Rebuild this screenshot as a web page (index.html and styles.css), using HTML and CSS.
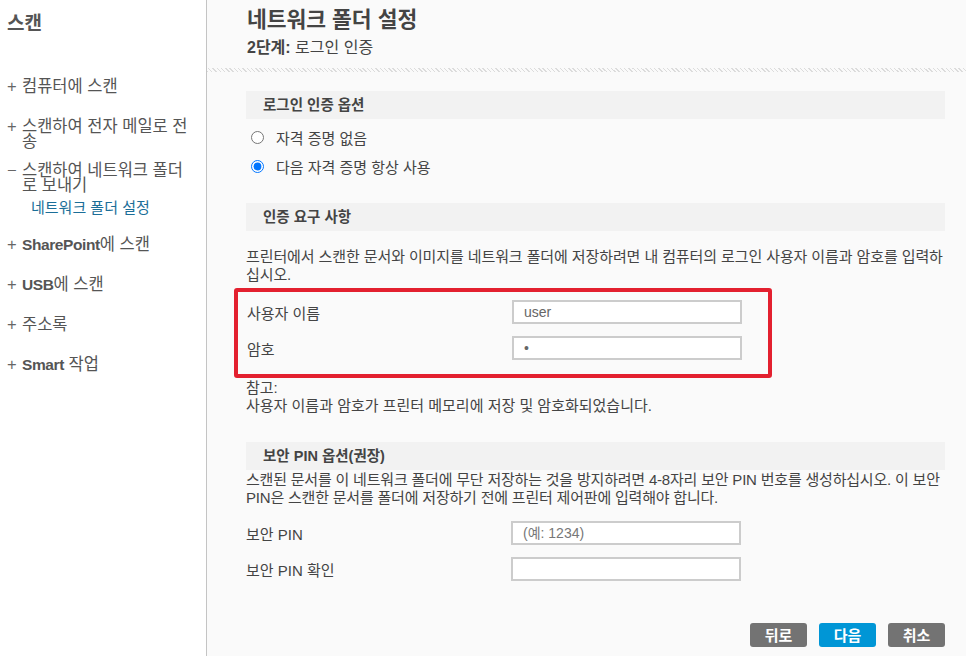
FILE: index.html
```html
<!DOCTYPE html>
<html lang="ko">
<head>
  <meta charset="UTF-8">
  <meta name="viewport" content="width=device-width, initial-scale=1.0">
  <title>네트워크 폴더 설정</title>
  <link rel="stylesheet" href="styles.css">
</head>
<body>
  <div class="page">
    <!-- 왼쪽 메뉴 -->
    <aside class="sidebar">
      <h1 class="side-title">스캔</h1>
      <ul class="side-menu">
        <li class="side-item"><span class="sign">+</span><span class="label">컴퓨터에 스캔</span></li>
        <li class="side-item"><span class="sign">+</span><span class="label">스캔하여 전자 메일로 전송</span></li>
        <li class="side-item side-item-tight"><span class="sign">−</span><span class="label">스캔하여 네트워크 폴더로 보내기</span></li>
        <li class="side-sub">네트워크 폴더 설정</li>
        <li class="side-item"><span class="sign">+</span><span class="label"><b>SharePoint</b>에 스캔</span></li>
        <li class="side-item"><span class="sign">+</span><span class="label"><b>USB</b>에 스캔</span></li>
        <li class="side-item"><span class="sign">+</span><span class="label">주소록</span></li>
        <li class="side-item"><span class="sign">+</span><span class="label"><b>Smart</b> 작업</span></li>
      </ul>
    </aside>

    <!-- 본문 -->
    <main class="main">
      <div class="head">
        <h2 class="title">네트워크 폴더 설정</h2>
        <p class="subtitle"><b>2단계:</b> 로그인 인증</p>
      </div>

      <div class="content">
        <div class="section-title">로그인 인증 옵션</div>
        <div class="radios">
          <label class="radio-row"><input type="radio" name="cred"> 자격 증명 없음</label>
          <label class="radio-row"><input type="radio" name="cred" checked> 다음 자격 증명 항상 사용</label>
        </div>

        <div class="section-title section-gap">인증 요구 사항</div>
        <p class="text text-first">프린터에서 스캔한 문서와 이미지를 네트워크 폴더에 저장하려면 내 컴퓨터의 로그인 사용자 이름과 암호를 입력하십시오.</p>

        <!-- 강조 표시 -->
        <div class="highlight">
          <div class="field">
            <span class="field-label">사용자 이름</span>
            <input class="input" type="text" value="user">
          </div>
          <div class="field">
            <span class="field-label">암호</span>
            <input class="input" type="password" value="a">
          </div>
        </div>

        <p class="text note">참고:<br>사용자 이름과 암호가 프린터 메모리에 저장 및 암호화되었습니다.</p>

        <div class="section-title section-gap-lg">보안 PIN 옵션(권장)</div>
        <p class="text text-pin">스캔된 문서를 이 네트워크 폴더에 무단 저장하는 것을 방지하려면 4-8자리 보안 PIN 번호를 생성하십시오. 이 보안 PIN은 스캔한 문서를 폴더에 저장하기 전에 프린터 제어판에 입력해야 합니다.</p>

        <div class="pin-fields">
          <div class="field">
            <span class="field-label">보안 PIN</span>
            <input class="input" type="text" placeholder="(예: 1234)">
          </div>
          <div class="field">
            <span class="field-label">보안 PIN 확인</span>
            <input class="input" type="text">
          </div>
        </div>

        <div class="buttons">
          <button class="btn">뒤로</button>
          <button class="btn btn-primary">다음</button>
          <button class="btn">취소</button>
        </div>
      </div>
    </main>
  </div>
</body>
</html>
```

FILE: styles.css
```css
* {
    box-sizing: border-box;
}

body {
    margin: 0;
    font-family: "Liberation Sans", "Noto Sans CJK KR", sans-serif;
    color: #444;
    background: #fafafa;
}

.page {
    display: flex;
    min-height: 100vh;
}

/* 왼쪽 메뉴 */
.sidebar {
    width: 207px;
    flex: none;
    background: #fff;
    border-right: 1px solid #c4c4c4;
    padding: 0 10px 0 7px;
}

.side-title {
    margin: 11px 0 0;
    font-size: 19px;
    line-height: 26px;
    font-weight: bold;
    color: #555;
}

.side-menu {
    list-style: none;
    margin: 0;
    padding: 0;
}

.side-item {
    display: flex;
    margin-top: 25px;
    font-size: 16.5px;
    line-height: 15px;
    color: #555;
}

.side-item:first-child {
    margin-top: 42px;
}

.side-item-tight {
    margin-top: 14px;
}

.side-sub + .side-item {
    margin-top: 22px;
}

.side-item .sign {
    width: 15px;
    flex: none;
    color: #666;
}

.side-item b {
    font-size: 15.5px;
    letter-spacing: -0.4px;
    color: #555;
}

.side-sub {
    margin-top: 7px;
    padding-left: 24px;
    font-size: 15px;
    line-height: 15px;
    color: #1b6e98;
}

/* 본문 */
.main {
    flex: 1;
}

.head {
    height: 72px;
    padding: 7px 0 0 40px;
    border-bottom: 4px solid transparent;
    border-image: repeating-linear-gradient(45deg, #dcdcdc 0 1px, transparent 1px 3px) 4;
}

.title {
    margin: 0;
    font-size: 21.5px;
    line-height: 26px;
    font-weight: bold;
    color: #444;
}

.subtitle {
    margin: 5px 0 0;
    font-size: 16px;
    line-height: 20px;
    color: #444;
}

.content {
    padding: 19px 21px 0 39px;
}

.section-title {
    height: 28px;
    padding-left: 17px;
    background: #f2f2f2;
    font-size: 14.5px;
    line-height: 28px;
    font-weight: bold;
    color: #444;
}

.section-gap {
    margin-top: 22px;
}

.section-gap-lg {
    margin-top: 27px;
}

.radios {
    padding-top: 4px;
}

.radio-row {
    display: flex;
    align-items: center;
    height: 29px;
    font-size: 15px;
    color: #444;
}

.radio-row input {
    margin: 0 12px 0 5px;
    width: 13px;
    height: 13px;
}

.text {
    margin: 0;
    font-size: 15px;
    line-height: 18px;
    color: #444;
}

.text-first {
    margin-top: 17px;
    letter-spacing: -0.1px;
}

.text-pin {
    margin-top: 1px;
    letter-spacing: -0.2px;
}

.highlight {
    width: 538px;
    margin: 4px 0 0 -12px;
    padding: 2px 26px 8px 9px;
    border: 4px solid #e3202f;
    border-radius: 3px;
}

.note {
    margin-top: 1px;
}

.field {
    display: flex;
    align-items: center;
    height: 36px;
    font-size: 15px;
    color: #444;
}

.field-label {
    width: 265px;
    flex: none;
}

.input {
    width: 230px;
    height: 24px;
    border: 2px solid #ccc;
    background: #fff;
    padding: 0 10px;
    font-family: "Liberation Sans", "Noto Sans CJK KR", sans-serif;
    font-size: 14px;
    color: #666;
    outline: none;
}

.input::placeholder {
    color: #777;
}

.pin-fields {
    margin-top: 8px;
}

.buttons {
    display: flex;
    justify-content: flex-end;
    gap: 12px;
    margin-top: 36px;
}

.btn {
    width: 57px;
    height: 24px;
    border: none;
    border-radius: 3px;
    background: #737373;
    color: #fff;
    font-family: "Noto Sans CJK KR", sans-serif;
    font-size: 15px;
    font-weight: bold;
    line-height: 24px;
    padding: 0;
}

.btn-primary {
    background: #0096d6;
}
```
